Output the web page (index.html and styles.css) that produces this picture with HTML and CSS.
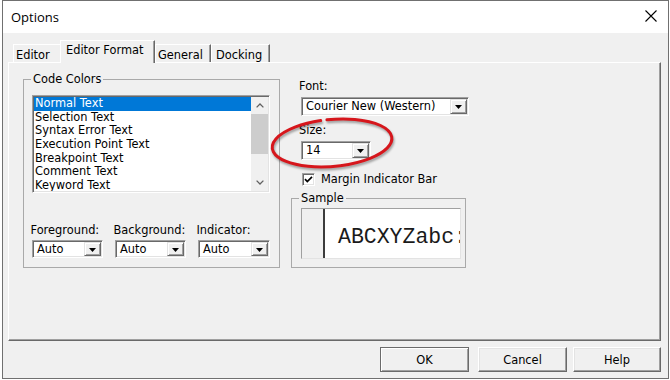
FILE: index.html
```html
<!DOCTYPE html>
<html lang="en">
<head>
<meta charset="utf-8">
<title>Options</title>
<link rel="stylesheet" href="styles.css">
</head>
<body>
<div class="window">
  <div class="titlebar">
    <span class="title">Options</span>
    <svg class="close" width="12" height="12" viewBox="0 0 12 12"><path d="M0.5 0.5 L11.5 11.5 M11.5 0.5 L0.5 11.5" stroke="#000" stroke-width="1.1" fill="none"/></svg>
  </div>
  <div class="client">
    <div class="tabs">
      <div class="tab t-editor">Editor</div>
      <div class="tab active t-format">Editor Format</div>
      <div class="tab t-general">General</div>
      <div class="tab t-docking">Docking</div>
    </div>
    <div class="panel">
      <fieldset class="group codecolors">
        <legend>Code Colors</legend>
        <div class="group-body">
          <div class="listbox">
            <ul class="items">
              <li class="sel">Normal Text</li>
              <li>Selection Text</li>
              <li>Syntax Error Text</li>
              <li>Execution Point Text</li>
              <li>Breakpoint Text</li>
              <li>Comment Text</li>
              <li>Keyword Text</li>
            </ul>
            <div class="vscroll">
              <div class="sb-btn"><svg width="8" height="5" viewBox="0 0 8 5"><polyline points="0.6,4.4 4,1 7.4,4.4" fill="none" stroke="#606060" stroke-width="1.3"/></svg></div>
              <div class="sb-track"><div class="sb-thumb"></div></div>
              <div class="sb-btn"><svg width="8" height="5" viewBox="0 0 8 5"><polyline points="0.6,0.6 4,4 7.4,0.6" fill="none" stroke="#606060" stroke-width="1.3"/></svg></div>
            </div>
          </div>
          <div class="pickers">
            <div class="picker">
              <div class="plabel">Foreground:</div>
              <div class="combo small"><span class="val">Auto</span><span class="dd"><svg width="7" height="4" viewBox="0 0 7 4"><polygon points="0,0 7,0 3.5,4" fill="#000"/></svg></span></div>
            </div>
            <div class="picker">
              <div class="plabel">Background:</div>
              <div class="combo small"><span class="val">Auto</span><span class="dd"><svg width="7" height="4" viewBox="0 0 7 4"><polygon points="0,0 7,0 3.5,4" fill="#000"/></svg></span></div>
            </div>
            <div class="picker">
              <div class="plabel">Indicator:</div>
              <div class="combo small"><span class="val">Auto</span><span class="dd"><svg width="7" height="4" viewBox="0 0 7 4"><polygon points="0,0 7,0 3.5,4" fill="#000"/></svg></span></div>
            </div>
          </div>
        </div>
      </fieldset>
      <div class="rightcol">
        <div class="lbl">Font:</div>
        <div class="combo font"><span class="val">Courier New (Western)</span><span class="dd"><svg width="7" height="4" viewBox="0 0 7 4"><polygon points="0,0 7,0 3.5,4" fill="#000"/></svg></span></div>
        <div class="lbl size-lbl">Size:</div>
        <div class="combo size"><span class="val">14</span><span class="dd"><svg width="7" height="4" viewBox="0 0 7 4"><polygon points="0,0 7,0 3.5,4" fill="#000"/></svg></span></div>
        <div class="check">
          <span class="box"><svg width="11" height="11" viewBox="0 0 11 11"><polyline points="2,5.2 4.3,7.6 9,2.8" fill="none" stroke="#000" stroke-width="1.7"/></svg></span>
          <span class="check-label">Margin Indicator Bar</span>
        </div>
        <fieldset class="group sample">
          <legend>Sample</legend>
          <div class="sample-view">
            <div class="margin-strip"></div>
            <div class="sample-text">ABCXYZabc:</div>
          </div>
        </fieldset>
      </div>
    </div>
    <div class="buttons">
      <button class="btn default ok">OK</button>
      <button class="btn cancel">Cancel</button>
      <button class="btn help">Help</button>
    </div>
  </div>
  <svg class="annotation" width="670" height="380" viewBox="0 0 670 380">
    <path d="M326.9 119.8 A60 23.5 -5 1 1 320.7 120.6" fill="none" stroke="#d6161c" stroke-width="3" stroke-linecap="round"/>
  </svg>
</div>
</body>
</html>
```
FILE: styles.css
```css
* { box-sizing: border-box; }
html, body { margin: 0; padding: 0; background: #fff; }
body {
  font-family: "DejaVu Sans", sans-serif;
  font-size: 11.4px;
  line-height: 14px;
  color: #000;
}
.window {
  position: relative;
  margin-left: 2px;
  width: 667px;
  height: 379px;
  border: 1px solid #707070;
  background: #f0f0f0;
  display: flex;
  flex-direction: column;
}
.titlebar {
  height: 32px;
  flex: none;
  background: #fff;
  display: flex;
  justify-content: space-between;
  align-items: flex-start;
  padding-left: 8px;
}
.title {
  font-family: "Open Sans", sans-serif;
  font-size: 13px;
  line-height: 32px;
}
.close { margin: 9px 11px 0 0; }

.client {
  flex: 1;
  padding: 7px 7px 0 5px;
  display: flex;
  flex-direction: column;
}
.tabs {
  height: 22px;
  display: flex;
  align-items: flex-end;
  padding-left: 5px;
}
.tab {
  height: 18px;
  padding-top: 3px;
  white-space: nowrap;
  background: #f0f0f0;
  border-top: 1px solid #fff;
  border-left: 1px solid #fff;
  border-right: 1px solid #696969;
  box-shadow: inset -1px 0 #a0a0a0;
}
.t-editor { width: 47px; padding-left: 2px; border-right: none; box-shadow: none; }
.t-format { width: 95px; padding-left: 5px; }
.t-general { width: 56px; padding-left: 2px; }
.t-docking { width: 59px; padding-left: 4px; }
.tab.active {
  position: relative;
  z-index: 1;
  height: 23px;
  margin-bottom: -1px;
  padding-top: 2px;
}

.panel {
  height: 279px;
  flex: none;
  border-top: 1px solid #fff;
  border-left: 1px solid #fff;
  border-right: 1px solid #696969;
  border-bottom: 1px solid #696969;
  box-shadow: inset -1px -1px #a0a0a0;
  padding: 9px 0 0 14px;
  display: flex;
  align-items: flex-start;
  gap: 11px;
}

.group {
  margin: 0;
  border: 1px solid #a9a9a9;
  padding: 0;
  min-width: 0;
}
.group legend {
  padding: 0 2px;
  margin-left: 7px;
  line-height: 14px;
}
.codecolors { width: 257px; padding: 9px 0 9px 0; }
.group-body { padding: 0 9px 0 8px; }

.listbox {
  width: 238px;
  height: 98px;
  display: flex;
  background: #fff;
  border: 1px solid;
  border-color: #a0a0a0 #fff #fff #a0a0a0;
  box-shadow: inset 1px 1px #696969, inset -1px -1px #e3e3e3;
  padding: 1px;
}
.items {
  flex: 1;
  margin: 0;
  padding: 0;
  list-style: none;
  overflow: hidden;
}
.items li {
  line-height: 13.7px;
  height: 13.7px;
  padding-left: 1px;
  white-space: nowrap;
}
.items li.sel { background: #0078d7; color: #fff; }
.vscroll {
  width: 17px;
  display: flex;
  flex-direction: column;
  background: #f0f0f0;
}
.sb-btn {
  height: 17px;
  display: flex;
  align-items: center;
  justify-content: center;
}
.sb-track { flex: 1; }
.sb-thumb { height: 40px; background: #cdcdcd; }

.pickers {
  margin-top: 30px;
  display: grid;
  grid-template-columns: 83px 83px 72px;
}
.plabel { margin-left: -1.5px; white-space: nowrap; }
.picker .combo { margin-top: 3px; }
.combo.small { width: 71px; }
.picker:last-child .combo.small { width: 72px; }

.combo {
  height: 18px;
  display: flex;
  background: #fff;
  border: 1px solid;
  border-color: #a0a0a0 #fff #fff #a0a0a0;
  box-shadow: inset 1px 1px #696969, inset -1px -1px #e3e3e3;
}
.combo .val {
  flex: 1;
  padding: 1px 0 0 4px;
  white-space: nowrap;
  overflow: hidden;
}
.combo .dd {
  width: 17px;
  margin: 1px 1px 1px 0;
  display: flex;
  align-items: center;
  justify-content: center;
  background: #f0f0f0;
  border: 1px solid;
  border-color: #e3e3e3 #696969 #696969 #e3e3e3;
  box-shadow: inset 1px 1px #fff, inset -1px -1px #a0a0a0;
}
.combo .dd svg { display: block; margin-top: 1px; }

.rightcol {
  width: 175px;
  padding-top: 7px;
  display: flex;
  flex-direction: column;
  align-items: flex-start;
}
.lbl { margin-left: 8px; }
.combo.font { width: 168px; height: 19px; margin: 4px 0 0 10px; }
.size-lbl { margin-top: 7px; }
.combo.size { width: 70px; height: 19px; margin: 4px 0 0 10px; }
.check {
  margin: 12px 0 0 11px;
  display: flex;
  align-items: flex-start;
  height: 14px;
}
.check .box {
  width: 13px;
  height: 13px;
  margin-top: 1px;
  background: #fff;
  border: 1px solid;
  border-color: #a0a0a0 #fff #fff #a0a0a0;
  box-shadow: inset 1px 1px #696969, inset -1px -1px #e3e3e3;
  display: flex;
  align-items: center;
  justify-content: center;
}
.check .box svg { display: block; }
.check-label { margin-left: 6px; white-space: nowrap; }

.sample { width: 175px; margin-top: 5px; padding: 3px 0 8px 0; }
.sample-view {
  margin-left: 9px;
  width: 160px;
  height: 51px;
  display: flex;
  border: 1px solid;
  border-color: #a0a0a0 #e3e3e3 #e3e3e3 #a0a0a0;
  background: #fff;
  overflow: hidden;
}
.margin-strip {
  width: 23px;
  flex: none;
  background: #f0f0f0;
  border-right: 2px solid #3c3c3c;
}
.sample-text {
  flex: 1;
  padding: 17px 0 0 13px;
  font-family: "Courier New", "Nimbus Mono PS", "Nimbus Mono L", "FreeMono", "Courier 10 Pitch", "Liberation Mono", monospace;
  font-size: 21.5px;
  line-height: 22px;
  white-space: nowrap;
  overflow: hidden;
  color: #1a1a1a;
}

.buttons {
  margin-top: 6px;
  display: flex;
  justify-content: flex-end;
}
.btn {
  height: 25px;
  padding: 0;
  font: inherit;
  color: #000;
  background: #f0f0f0;
  border: 1px solid;
  border-color: #fff #696969 #696969 #fff;
  box-shadow: inset -1px -1px #a0a0a0, inset 1px 1px #e3e3e3;
}
.btn.ok { width: 89px; margin-right: 9px; }
.btn.cancel { width: 89px; margin-right: 6px; }
.btn.help { width: 88px; }
.btn.default {
  border-color: #6b6b6b;
  box-shadow: inset 1px 1px #fff, inset -1px -1px #a0a0a0;
}

.annotation {
  position: absolute;
  left: -3px;
  top: -1px;
  pointer-events: none;
  filter: drop-shadow(1px 2px 1.2px rgba(0, 0, 0, 0.35));
}
```
